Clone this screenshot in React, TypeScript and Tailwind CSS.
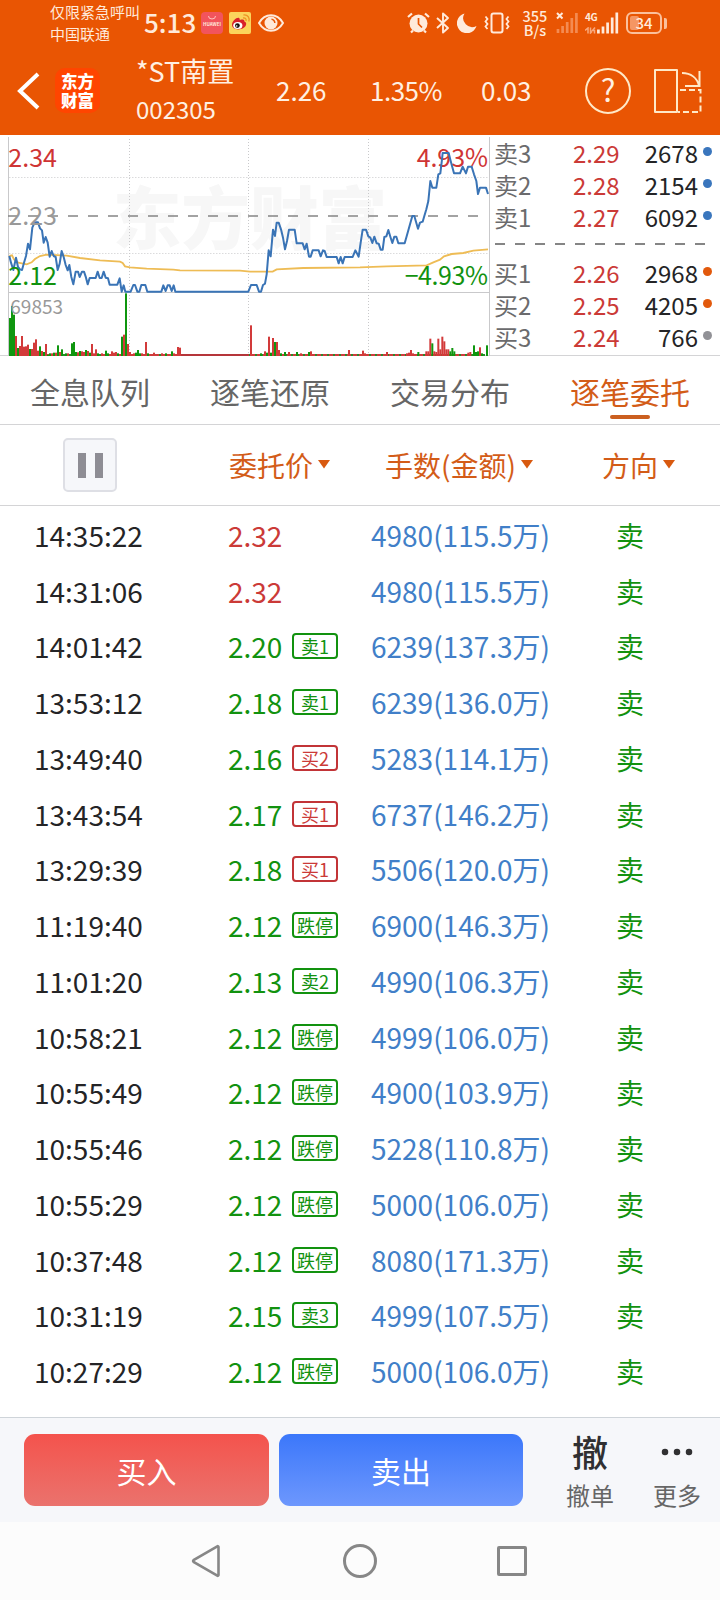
import type { ReactNode } from 'react';

type Side = 'up' | 'down';

const orders: { time: string; price: string; side: Side; tag?: string; tagSide?: Side; amount: string }[] = [
  { time: '14:35:22', price: '2.32', side: 'up', amount: '4980(115.5万)' },
  { time: '14:31:06', price: '2.32', side: 'up', amount: '4980(115.5万)' },
  { time: '14:01:42', price: '2.20', side: 'down', tag: '卖1', tagSide: 'down', amount: '6239(137.3万)' },
  { time: '13:53:12', price: '2.18', side: 'down', tag: '卖1', tagSide: 'down', amount: '6239(136.0万)' },
  { time: '13:49:40', price: '2.16', side: 'down', tag: '买2', tagSide: 'up', amount: '5283(114.1万)' },
  { time: '13:43:54', price: '2.17', side: 'down', tag: '买1', tagSide: 'up', amount: '6737(146.2万)' },
  { time: '13:29:39', price: '2.18', side: 'down', tag: '买1', tagSide: 'up', amount: '5506(120.0万)' },
  { time: '11:19:40', price: '2.12', side: 'down', tag: '跌停', tagSide: 'down', amount: '6900(146.3万)' },
  { time: '11:01:20', price: '2.13', side: 'down', tag: '卖2', tagSide: 'down', amount: '4990(106.3万)' },
  { time: '10:58:21', price: '2.12', side: 'down', tag: '跌停', tagSide: 'down', amount: '4999(106.0万)' },
  { time: '10:55:49', price: '2.12', side: 'down', tag: '跌停', tagSide: 'down', amount: '4900(103.9万)' },
  { time: '10:55:46', price: '2.12', side: 'down', tag: '跌停', tagSide: 'down', amount: '5228(110.8万)' },
  { time: '10:55:29', price: '2.12', side: 'down', tag: '跌停', tagSide: 'down', amount: '5000(106.0万)' },
  { time: '10:37:48', price: '2.12', side: 'down', tag: '跌停', tagSide: 'down', amount: '8080(171.3万)' },
  { time: '10:31:19', price: '2.15', side: 'down', tag: '卖3', tagSide: 'down', amount: '4999(107.5万)' },
  { time: '10:27:29', price: '2.12', side: 'down', tag: '跌停', tagSide: 'down', amount: '5000(106.0万)' },
];

const asks = [
  { label: '卖3', price: '2.29', volume: '2678', dot: 'bg-[#3a76bd]' },
  { label: '卖2', price: '2.28', volume: '2154', dot: 'bg-[#3a76bd]' },
  { label: '卖1', price: '2.27', volume: '6092', dot: 'bg-[#3a76bd]' },
];

const bids = [
  { label: '买1', price: '2.26', volume: '2968', dot: 'bg-[#e2590c]' },
  { label: '买2', price: '2.25', volume: '4205', dot: 'bg-[#e2590c]' },
  { label: '买3', price: '2.24', volume: '766', dot: 'bg-[#919196]' },
];

const tabs = ['全息队列', '逐笔还原', '交易分布', '逐笔委托'];

// Chart points are in thirds of a pixel
const pricePoints =
  '28,375 33,395 40,417 48,380 54,408 60,415 66,417 72,395 78,375 84,338 90,355 97,290 104,274 114,274 120,292 126,298 131,335 137,318 143,335 149,377 155,360 161,375 167,378 173,417 179,398 185,360 191,378 197,402 203,418 208,402 214,438 220,460 227,422 234,422 239,438 246,422 252,422 258,440 263,460 269,441 287,441 293,422 299,441 305,441 311,422 317,440 324,442 329,461 352,461 359,442 365,482 371,463 376,482 392,482 400,462 405,462 412,482 418,482 424,462 436,462 442,482 484,482 490,463 497,480 503,463 509,463 515,480 521,463 526,482 745,482 ' +
  '753,462 770,462 777,482 783,482 789,462 795,458 800,430 806,358 812,376 819,296 825,315 830,275 836,275 843,295 849,320 855,355 861,330 867,296 884,296 890,337 908,337 914,355 920,338 927,377 932,377 938,358 956,358 962,376 969,358 974,360 980,378 1010,378 1016,397 1022,378 1028,397 1034,378 1058,378 1066,358 1076,377 1082,335 1088,296 1098,296 1105,316 1111,320 1117,336 1123,317 1130,337 1136,338 1142,356 1148,356 1153,318 1159,316 1165,297 1171,317 1177,336 1183,317 1189,317 1195,337 1214,337 1220,316 1237,255 1243,255 1254,293 1260,275 1268,272 1273,255 1279,235 1285,210 1291,150 1297,170 1309,170 1315,130 1321,127 1326,85 1328,66 1346,66 1352,90 1362,127 1380,127 1388,107 1398,127 1404,107 1415,107 1422,130 1429,150 1434,189 1440,170 1458,170 1464,189';

const averagePoints =
  '28,375 36,373 42,385 55,395 80,400 95,394 105,384 120,375 140,371 200,374 240,381 300,388 360,392 368,396 375,406 390,409 440,413 520,416 540,418 720,419 750,422 818,422 830,415 910,411 1080,409 1160,406 1280,403 1300,394 1320,386 1332,376 1355,369 1390,366 1420,359 1464,355';

// x, height, colour of the minutes with notable volume
const volumes: [number, number, 'r' | 'g'][] = [
  [30, 114, 'g'], [36, 150, 'g'], [42, 124, 'g'], [48, 60, 'r'], [54, 24, 'g'], [60, 30, 'r'], [66, 60, 'r'], [72, 28, 'r'],
  [78, 29, 'r'], [84, 34, 'r'], [90, 21, 'g'], [96, 21, 'r'], [102, 40, 'r'], [108, 50, 'r'], [114, 16, 'r'], [120, 29, 'g'],
  [126, 15, 'r'], [132, 12, 'g'], [138, 36, 'r'], [144, 4, 'g'], [150, 8, 'g'], [156, 8, 'r'], [162, 10, 'g'], [168, 10, 'r'],
  [174, 32, 'g'], [180, 12, 'r'], [186, 20, 'g'], [198, 8, 'g'], [204, 8, 'r'], [216, 38, 'g'], [222, 42, 'g'], [228, 12, 'g'],
  [234, 11, 'r'], [240, 15, 'g'], [246, 14, 'r'], [252, 12, 'r'], [258, 18, 'g'], [264, 15, 'r'], [270, 10, 'g'], [276, 36, 'r'],
  [282, 8, 'r'], [288, 20, 'r'], [294, 8, 'g'], [306, 8, 'r'], [318, 16, 'g'], [324, 8, 'g'], [336, 14, 'r'], [342, 10, 'r'],
  [348, 12, 'r'], [354, 8, 'g'], [366, 58, 'g'], [372, 64, 'r'], [378, 188, 'g'], [384, 36, 'r'], [390, 12, 'r'], [402, 8, 'r'],
  [408, 10, 'g'], [414, 18, 'g'], [420, 8, 'g'], [426, 8, 'r'], [438, 42, 'r'], [444, 8, 'g'], [462, 10, 'r'], [486, 8, 'r'],
  [498, 8, 'g'], [516, 14, 'g'], [522, 8, 'r'], [534, 27, 'r'], [540, 25, 'r'], [753, 92, 'r'], [783, 8, 'g'], [795, 14, 'r'],
  [801, 10, 'g'], [807, 58, 'r'], [813, 10, 'g'], [819, 54, 'r'], [825, 42, 'g'], [831, 42, 'r'], [837, 18, 'r'], [843, 8, 'g'],
  [855, 12, 'g'], [867, 12, 'r'], [891, 12, 'g'], [903, 8, 'r'], [927, 12, 'g'], [933, 14, 'r'], [1047, 18, 'r'], [1089, 16, 'r'],
  [1095, 8, 'r'], [1161, 12, 'r'], [1221, 8, 'r'], [1227, 10, 'r'], [1233, 18, 'r'], [1239, 8, 'r'], [1255, 12, 'g'], [1279, 14, 'r'],
  [1285, 14, 'r'], [1291, 52, 'r'], [1297, 38, 'g'], [1303, 14, 'r'], [1309, 12, 'r'], [1315, 52, 'r'], [1321, 20, 'r'], [1327, 58, 'r'],
  [1333, 44, 'r'], [1339, 20, 'r'], [1345, 20, 'r'], [1351, 14, 'g'], [1357, 24, 'g'], [1363, 14, 'g'], [1405, 10, 'r'], [1411, 12, 'r'],
  [1422, 32, 'g'], [1428, 12, 'g'], [1434, 14, 'g'], [1440, 26, 'r'], [1446, 8, 'g'], [1461, 32, 'g'],
];

const baseTicks = Array.from({ length: 238 }, (_, i) => 30 + i * 6);

const Icon = ({ w, h, className, children }: { w: number; h: number; className?: string; children: ReactNode }) => (
  <svg width={w} height={h} viewBox={`0 0 ${w} ${h}`} fill="none" className={`block shrink-0 ${className ?? ''}`}>
    {children}
  </svg>
);

const StatusBar = () => (
  <div className="flex h-[46px] items-center text-[#ffeadb]">
    <div className="ml-[50px] w-[94px] whitespace-nowrap text-[15px] leading-[22px]">
      <div>仅限紧急呼叫</div>
      <div>中国联通</div>
    </div>
    <div className="w-[57px] pb-[2px] text-[26px] leading-8 font-medium">5:13</div>
    <div className="flex h-[22px] w-[22px] shrink-0 flex-col items-center rounded-[4px] bg-[#f2545c]">
      <Icon w={10} h={10}>
        <path d="M1.5 4a3.5 3 0 0 0 7 0" stroke="#ffc5c0" />
      </Icon>
      <span className="text-[4.5px] leading-[5px] font-bold">HUAWEI</span>
    </div>
    <Icon w={22} h={22} className="ml-[6px]">
      <rect width="22" height="22" rx="2" fill="#fbd45c" />
      <path d="M3 13c0-4 5-8 7-7 1.500.8.6 2 .6 2s5-2 4.800 1.500c3 1 2 5-1 6.500-5 3-11.400 1-11.400-3z" fill="#d9202a" />
      <ellipse cx="8.800" cy="13.400" rx="4.600" ry="3.500" fill="#fff" />
      <circle cx="8.400" cy="13.600" r="2.400" fill="#1a1410" />
      <circle cx="7.700" cy="14" r=".8" fill="#fff" />
      <path d="M14 6c2.500-.4 3.500 1 3 3M14.500 3c4.500-.5 6.500 3 5.300 6.500" stroke="#ef9324" strokeWidth="1.300" />
    </Icon>
    <Icon w={26} h={20} className="ml-[7px]">
      <path d="M1 10C7-.2 19-.2 25 10 19 20.200 7 20.200 1 10z" stroke="currentColor" strokeWidth="2" />
      <circle cx="13" cy="10" r="6.500" fill="currentColor" />
      <path d="M13.500 6.300a3.500 3.500 0 0 1 3.300 3.700" stroke="#e95503" strokeWidth="1.500" />
    </Icon>
    <Icon w={23} h={22} className="ml-[123px]">
      <circle cx="11.500" cy="11.500" r="9" fill="currentColor" />
      <path d="M1 5 5 1.500M22 5l-4-3.500M4 20.500l2-2M19 20.500l-2-2" stroke="currentColor" strokeWidth="2.200" />
      <path d="M11.500 6v6l3.500 3.500" stroke="#e95503" strokeWidth="1.700" />
    </Icon>
    <Icon w={14} h={22} className="ml-[6px]">
      <path d="m1 6 11 10-5 4.500v-19L12 6 1 16" stroke="currentColor" strokeWidth="1.900" strokeLinejoin="round" />
    </Icon>
    <Icon w={20} h={20} className="ml-[7px]">
      <path d="M7.500.5a10 10 0 1 0 12 12.500A9 9 0 0 1 7.500.5z" fill="currentColor" />
    </Icon>
    <Icon w={26} h={22} className="ml-[7px]">
      <rect x="7.500" y="1.500" width="11" height="19" rx="2" stroke="currentColor" strokeWidth="2" />
      <path d="M1.500 4.500 3.500 7l-2 2.500 2 2.500-2 2.500 2 2.500M24.500 4.500l-2 2.500 2 2.500-2 2.500 2 2.500-2 2.500" stroke="currentColor" strokeWidth="1.800" />
    </Icon>
    <div className="ml-[11px] w-[28px] text-center text-[14.5px] leading-[14px] font-medium">
      <div>355</div>
      <div>B/s</div>
    </div>
    <Icon w={22} h={22} className="ml-[7px]">
      <path d="m1 1 5.500 5.500M6.500 1 1 6.500" stroke="currentColor" strokeWidth="2" />
      <path d="M2 21v-4M6.600 21v-7M11.200 21V10M15.800 21V6M20.400 21V1" stroke="#f48b52" strokeWidth="2.700" />
    </Icon>
    <div className="ml-[7px] flex h-[22px] items-end">
      <div className="flex h-[22px] w-[12px] flex-col justify-between">
        <span className="text-[10px] leading-[10px] font-bold tracking-[-0.5px]">4G</span>
        <Icon w={11} h={7}>
          <path d="M0 3.500 3 1v5.500M5.500.5V6l1.500-1.500M10 .5 7.500 3.500h2v3" stroke="#f9a87c" strokeWidth="1.500" />
        </Icon>
      </div>
      <Icon w={22} h={22}>
        <path d="M1.400 21.500v-4M6 21.500v-7M10.600 21.500v-11M15.200 21.500v-16M19.800 21.500v-21" stroke="currentColor" strokeWidth="2.700" />
      </Icon>
    </div>
    <div className="ml-[7px] flex items-center">
      <div className="relative flex h-[22px] w-[36px] items-center justify-center overflow-hidden rounded-[6px] border-2 border-[#fbc09c]">
        <div className="absolute top-[2px] bottom-[2px] left-[2px] w-[9px] rounded-[2px] bg-[#f59663]" />
        <span className="relative text-[15px] leading-[18px] font-medium">34</span>
      </div>
      <div className="ml-[2px] h-[11px] w-[3px] rounded-r-[2px] bg-[#fbc09c]" />
    </div>
  </div>
);

const Header = () => (
  <div className="flex h-[89px] items-center text-[26px] leading-8 text-[#fff0e2]">
    <Icon w={24} h={38} className="ml-[17px]">
      <path d="M21 2 3 19l18 17" stroke="#fff" strokeWidth="4" />
    </Icon>
    <div className="ml-[14px] flex h-[45px] w-[45px] flex-col items-center justify-center rounded-[10px] bg-[#ff4500] text-[16.5px] leading-[19px] font-black text-white">
      <div>东方</div>
      <div>财富</div>
    </div>
    <div className="ml-[36px] w-[140px] pb-[2px] whitespace-nowrap">
      <div className="h-[38px] text-[27px] leading-[34px]">*ST南置</div>
      <div className="h-[34px] text-[24px] leading-[34px]">002305</div>
    </div>
    <div className="w-[94px] pb-[2px]">2.26</div>
    <div className="w-[111px] pb-[2px] tracking-[-0.5px]">1.35%</div>
    <div className="w-[104px] pb-[2px]">0.03</div>
    <div className="flex h-[46px] w-[46px] shrink-0 items-center justify-center rounded-full border-2 border-[#ffe9c8] pb-[3px] text-[31px]">
      ?
    </div>
    <Icon w={50} h={46} className="ml-[22px]">
      <path d="M2 2h22v42H2z" stroke="#ffe9c8" strokeWidth="2" strokeLinejoin="round" />
      <path d="M27 22h20.500v22H25" stroke="#ffe9c8" strokeWidth="2" strokeDasharray="6 3" />
      <path d="M29 5c9 0 15 5 17 12.500M46.500 3v15H32" stroke="#ffe9c8" strokeWidth="2" />
    </Icon>
  </div>
);

const PriceChart = () => (
  <svg width="490" height="220" viewBox="0 15 1470 660" className="block shrink-0" fontSize="75">
    <text x="338" y="338" fontSize="206" fontWeight="900" fill="#f7f7f7">
      东方财富
    </text>
    <g stroke="#c9c9cb" strokeWidth="3" fill="none">
      <path d="M25.500 18v660M25 484.500h1444M1468.500 18v660" />
      <path d="M388.500 24v652M745.500 24v652M1105.500 24v652M28 139.500h1438M28 367.500h1438" strokeDasharray="3 6" />
    </g>
    <path d="M24 255h1440" stroke="#858585" strokeWidth="5" strokeDasharray="30 30" />
    <polyline points={averagePoints} fill="none" stroke="#eebc55" strokeWidth="5.500" />
    <g>
      {baseTicks.map((x, i) => (
        <rect key={x} x={x - 3} y="669" width="6" height="6" fill={x > 540 && x < 750 ? '#b5353a' : i % 3 ? '#ce3c3c' : '#2a8a2a'} />
      ))}
      {volumes.map(([x, h, c]) => (
        <rect key={x} x={x - 3} y={675 - h} width="6" height={h} fill={c === 'r' ? '#d23a3a' : '#0f960f'} />
      ))}
    </g>
    <text x="1250" y="107" fill="#cf3434" textLength="214">
      4.93%
    </text>
    <polyline points={pricePoints} fill="none" stroke="#3a74b6" strokeWidth="6" strokeLinejoin="round" />
    <text x="25" y="107" fill="#cf3434">
      2.34
    </text>
    <text x="25" y="283" fill="#999">
      2.23
    </text>
    <text x="25" y="463" fill="#12920f">
      2.12
    </text>
    <text x="1214" y="463" fill="#12920f" textLength="250">
      −4.93%
    </text>
    <text x="31" y="550" fontSize="57" fill="#999">
      69853
    </text>
  </svg>
);

const BookRow = ({ label, price, volume, dot }: (typeof asks)[number]) => (
  <div className="flex h-8 items-center pl-[4px] text-[24px] leading-7">
    <div className="w-[79px] text-[#6b6b6d]">{label}</div>
    <div className="w-[60px] text-[#cb3a37]">{price}</div>
    <div className="w-[65px] text-right text-[#242426]">{volume}</div>
    <div className={`mb-[3px] ml-[5px] h-[9px] w-[9px] rounded-full ${dot}`} />
  </div>
);

const OrderBook = () => (
  <div className="flex-1 pt-[1px]">
    {asks.map((row) => (
      <BookRow key={row.label} {...row} />
    ))}
    <Icon w={230} h={24}>
      <path d="M5 11h214" stroke="#858585" strokeWidth="2" strokeDasharray="10 10" />
    </Icon>
    {bids.map((row) => (
      <BookRow key={row.label} {...row} />
    ))}
  </div>
);

const SortLabel = ({ children }: { children: ReactNode }) => (
  <div className="flex items-center whitespace-nowrap">
    {children}
    <Icon w={12} h={9} className="ml-[5px] mb-[1px]">
      <path d="M0 0h12L6 8.500z" fill="#d8590f" />
    </Icon>
  </div>
);

const Table = () => (
  <>
    <div className="grid h-[81px] grid-cols-[229px_156px_217px_1fr] items-center border-b border-[#d4d4d6] text-[28px] leading-9 text-[#d35c18]">
      <div className="ml-[63px] flex h-[54px] w-[54px] items-center justify-center gap-[9px] rounded-[5px] border-2 border-[#dedfe5] bg-[#f6f7fa]">
        <div className="h-[25px] w-[8px] bg-[#8e8d94]" />
        <div className="h-[25px] w-[8px] bg-[#8e8d94]" />
      </div>
      <SortLabel>委托价</SortLabel>
      <SortLabel>手数(金额)</SortLabel>
      <SortLabel>方向</SortLabel>
    </div>
    <div className="h-[911px] pt-[1px] text-[28px] leading-9">
      {orders.map((o) => (
        <div key={o.time} className="grid h-[55.750px] grid-cols-[228px_143px_245px_1fr] items-center">
          <div className="pl-[34px] text-[#242426]">{o.time}</div>
          <div className="flex items-center">
            <span className={`w-[64px] ${o.side === 'up' ? 'text-[#cb3a37]' : 'text-[#12920f]'}`}>{o.price}</span>
            {o.tag && (
              <span
                className={`flex h-[26px] w-[46px] items-center justify-center rounded-[4px] border-2 text-[18px] leading-5 ${
                  o.tagSide === 'up' ? 'border-[#c23437] text-[#cb3a37]' : 'border-[#12920f] text-[#12920f]'
                }`}
              >
                {o.tag}
              </span>
            )}
          </div>
          <div className="text-[#417fc8]">{o.amount}</div>
          <div className="text-[#12920f]">卖</div>
        </div>
      ))}
    </div>
  </>
);

const BottomBar = () => (
  <div className="flex h-[105px] items-start border-t border-[#cfd4d9] bg-[#f6f7fa] pt-4 pl-6">
    <div className="flex h-[72px] w-[245px] items-center justify-center rounded-[11px] bg-linear-to-b from-[#f4524c] to-[#ea726d] text-[30px] text-white">
      买入
    </div>
    <div className="ml-[10px] flex h-[72px] w-[244px] items-center justify-center rounded-[11px] bg-linear-to-b from-[#3b77fa] to-[#6d97fd] text-[30px] text-white">
      卖出
    </div>
    <div className="ml-[31px] flex w-[72px] flex-col items-center">
      <div className="h-[44px] text-[36px] leading-[34px] font-medium text-[#303032]">撤</div>
      <div className="text-[24px] leading-[34px] text-[#666]">撤单</div>
    </div>
    <div className="ml-[15px] flex w-[72px] flex-col items-center">
      <Icon w={32} h={44}>
        <path d="M4 18h.01M16 18h.01M28 18h.01" stroke="#303032" strokeWidth="6.500" strokeLinecap="round" />
      </Icon>
      <div className="text-[24px] leading-[34px] text-[#666]">更多</div>
    </div>
  </div>
);

export default function App() {
  return (
    <div className="h-[1600px] w-[720px] overflow-hidden bg-white font-['Noto_Sans_CJK_SC',sans-serif]">
      <div className="bg-[#e95503]">
        <StatusBar />
        <Header />
      </div>

      <div className="flex h-[221px] border-b border-[#d4d4d6] pt-px">
        <PriceChart />
        <OrderBook />
      </div>

      <div className="grid h-[69px] grid-cols-4 border-b border-[#d4d4d6]">
        {tabs.map((tab, i) => (
          <div
            key={tab}
            className={`flex flex-col items-center pt-[15px] text-[30px] leading-[40px] ${i === 3 ? 'text-[#d35c18]' : 'text-[#666]'}`}
          >
            {tab}
            {i === 3 && <div className="mt-[4px] h-[4px] w-[40px] rounded-full bg-[#cb5f1f]" />}
          </div>
        ))}
      </div>

      <Table />
      <BottomBar />

      <div className="flex h-[78px] items-center bg-[#fcfcfc]">
        <Icon w={30} h={34} className="ml-[191px]">
          <path d="M27.500 3v28a.8.8 0 0 1-1.200.7L2.500 17.800a1 1 0 0 1 0-1.600L26.300 2.300a.8.8 0 0 1 1.200.7z" stroke="#878787" strokeWidth="2.600" />
        </Icon>
        <div className="ml-[122px] h-[34px] w-[34px] rounded-full border-[3px] border-[#878787]" />
        <div className="ml-[120px] h-[30px] w-[30px] rounded-[2px] border-[3px] border-[#878787]" />
      </div>
    </div>
  );
}
